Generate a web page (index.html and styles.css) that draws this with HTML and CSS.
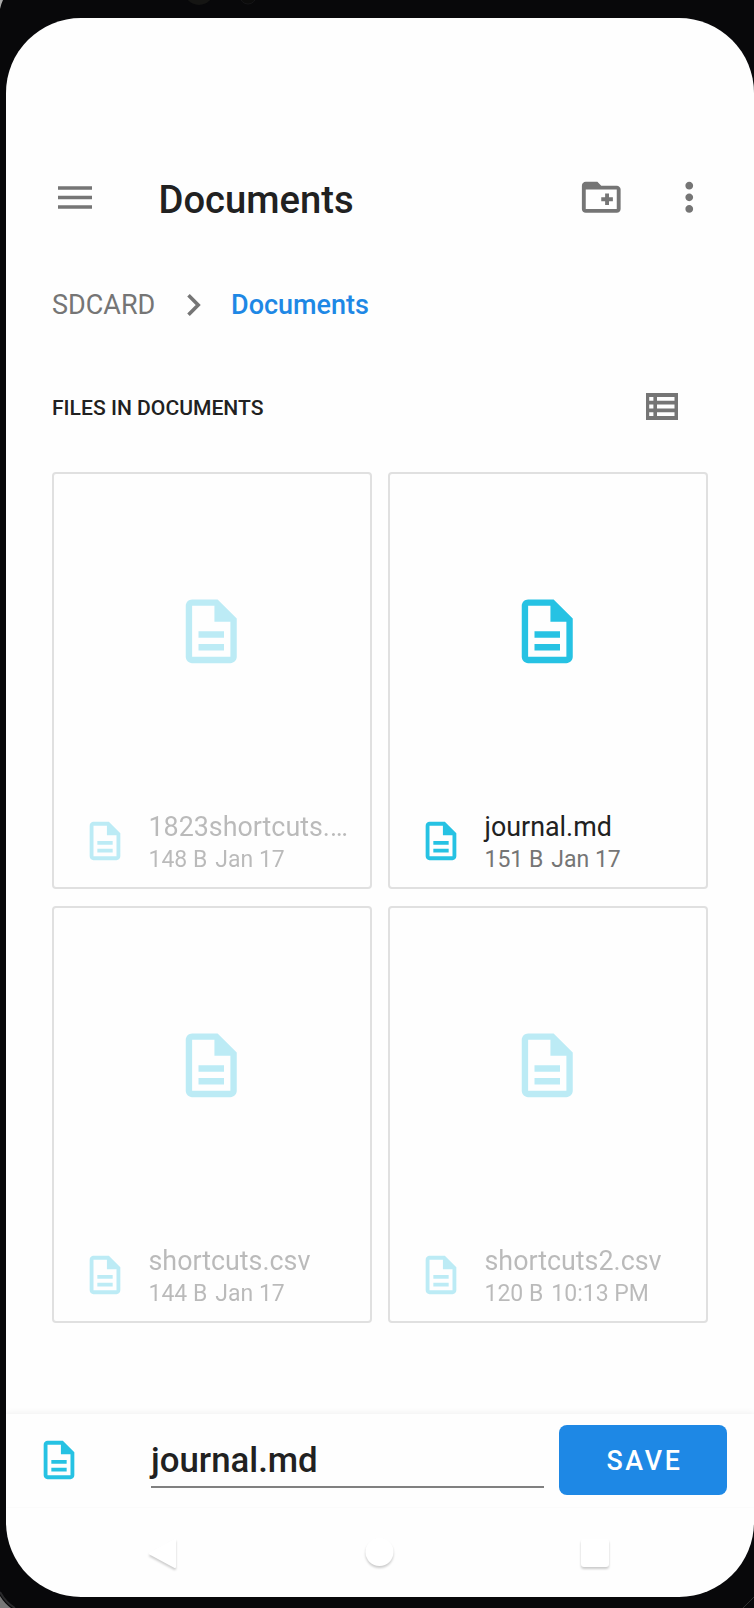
FILE: index.html
```
<!DOCTYPE html>
<html lang="en">
<head>
<meta charset="utf-8">
<title>Documents</title>
<link rel="stylesheet" href="styles.css">
</head>
<body>
<svg class="defs" width="0" height="0">
  <symbol id="doc" viewBox="0 0 24 24"><path d="M8 16h8v2H8zm0-4h8v2H8zm6-10H6c-1.100 0-2 .9-2 2v16c0 1.100.890 2 1.990 2H18c1.100 0 2-.9 2-2V8l-6-6zm4 18H6V4h7v5h5v11z"/></symbol>
</svg>
<div class="device">
  <svg class="bezel" width="754" height="1608" viewBox="0 0 754 1608">
    <path d="M0 0H3Q1 4 0 9z" fill="#aaa"/>
    <circle cx="199" cy="-10" r="15" fill="#151513"/>
    <circle cx="248" cy="-4" r="8" fill="#0b0b0b" stroke="#151517"/>
    <path d="M0 1596Q5 1604 11 1608H0z" fill="#777"/>
    <path d="M0 1592Q6 1603 15 1608" fill="none" stroke="#2a2a2c" stroke-width="2"/>
    <path d="M754 1597L743 1608" stroke="#303030" stroke-width="1"/>
  </svg>
  <main class="screen">
    <header class="appbar">
      <svg class="menu" viewBox="0 0 34 24"><path d="M0 2h34M0 11.500h34M0 21h34" stroke="#757575" stroke-width="3.400"/></svg>
      <h1 class="title">Documents</h1>
      <svg class="newfolder" viewBox="0 0 24 24"><path d="M20 6h-8l-2-2H4c-1.110 0-1.990.890-1.990 2L2 18c0 1.110.890 2 2 2h16c1.110 0 2-.890 2-2V8c0-1.110-.890-2-2-2zm0 12H4V8h16v10zm-8-4h2v2h2v-2h2v-2h-2v-2h-2v2h-2z"/></svg>
      <svg class="more" viewBox="0 0 24 24"><path d="M12 8c1.100 0 2-.9 2-2s-.9-2-2-2-2 .9-2 2 .9 2 2 2zm0 2c-1.100 0-2 .9-2 2s.9 2 2 2 2-.9 2-2-.9-2-2-2zm0 6c-1.100 0-2 .9-2 2s.9 2 2 2 2-.9 2-2-.9-2-2-2z"/></svg>
    </header>
    <nav class="crumbs">
      <span class="crumb">SDCARD</span>
      <svg class="chevron" viewBox="0 0 14 24"><path d="M1.500 2.200L11.200 12L1.500 21.800" fill="none" stroke="#757575" stroke-width="3.600"/></svg>
      <span class="crumb current">Documents</span>
    </nav>
    <div class="section">
      <h2 class="label">FILES IN DOCUMENTS</h2>
      <svg class="listview" viewBox="0 0 32 27"><path fill-rule="evenodd" d="M0 0h32v27H0zM3.200 4v3.700h4.200V4zM11 4v3.700h17.500V4zM3.200 11.500v3.900h4.200v-3.900zM11 11.500v3.900h17.500v-3.900zM3.200 19.200v3.700h4.200v-3.700zM11 19.200v3.700h17.500v-3.700z"/></svg>
    </div>
    <section class="grid">
      <article class="card off"><div class="thumb"><svg class="big"><use href="#doc"/></svg></div><div class="info"><svg class="small"><use href="#doc"/></svg><div class="text"><div class="name">1823shortcuts.…</div><div class="meta"><span>148 B</span><span>Jan 17</span></div></div></div></article>
      <article class="card"><div class="thumb"><svg class="big"><use href="#doc"/></svg></div><div class="info"><svg class="small"><use href="#doc"/></svg><div class="text"><div class="name">journal.md</div><div class="meta"><span>151 B</span><span>Jan 17</span></div></div></div></article>
      <article class="card off"><div class="thumb"><svg class="big"><use href="#doc"/></svg></div><div class="info"><svg class="small"><use href="#doc"/></svg><div class="text"><div class="name">shortcuts.csv</div><div class="meta"><span>144 B</span><span>Jan 17</span></div></div></div></article>
      <article class="card off"><div class="thumb"><svg class="big"><use href="#doc"/></svg></div><div class="info"><svg class="small"><use href="#doc"/></svg><div class="text"><div class="name">shortcuts2.csv</div><div class="meta"><span>120 B</span><span>10:13 PM</span></div></div></div></article>
    </section>
    <footer class="savebar">
      <svg class="small"><use href="#doc"/></svg>
      <div class="field">journal.md</div>
      <button class="save">SAVE</button>
    </footer>
    <div class="navbar">
      <svg class="key" viewBox="0 0 28 30"><path d="M26 1v27L1 14.500z" fill="#fff" stroke="#fff" stroke-linejoin="round" stroke-width="2"/></svg>
      <svg class="key" viewBox="0 0 28 30"><circle cx="14.500" cy="13" r="14" fill="#fff"/></svg>
      <svg class="key" viewBox="0 0 28 30"><rect width="28" height="28" rx="3" fill="#fff"/></svg>
    </div>
  </main>
</div>
</body>
</html>
```
FILE: styles.css
```
* { box-sizing: border-box; }
body { margin: 0; font-family: Roboto, "Liberation Sans", sans-serif; color: #212121; }
svg { display: block; flex: none; fill: #757575; }
.defs { position: absolute; }
.device { position: relative; width: 754px; height: 1608px; padding: 18px 0 0 6px; background: #08080a; overflow: hidden; }
.bezel { position: absolute; left: 0; top: 0; }
.screen { position: relative; width: 748px; height: 1579px; padding-top: 134px; background: #fefefe; border-radius: 75px; overflow: hidden; display: flex; flex-direction: column; }
.appbar { display: flex; align-items: center; height: 92px; padding-left: 51.500px; }
.menu { width: 34px; height: 24px; margin-top: -1px; }
.title { flex: none; margin: 3px 0 0 67px; width: 402px; font-size: 38.200px; line-height: 46px; font-weight: 500; white-space: nowrap; }
.newfolder, .more { width: 46.500px; height: 46.500px; }
.newfolder { margin: -1.500px 0 0 17.300px; }
.more { margin: -1.500px 0 0 41.500px; }
.crumbs { display: flex; align-items: center; height: 122px; padding-left: 46px; font-size: 27px; line-height: 32px; }
.crumb { width: 134.500px; color: #757575; font-weight: 400; }
.chevron { width: 14px; height: 24px; margin: -1px 30.500px 0 0; }
.crumb.current { color: #1e88e5; font-weight: 500; }
.section { display: flex; align-items: center; justify-content: space-between; height: 82px; padding: 0 76.500px 0 46px; }
.label { margin: 2px 0 0; font-size: 21.100px; line-height: 26px; font-weight: 500; white-space: nowrap; }
.listview { width: 32px; height: 27px; margin-top: -2px; }
.grid { display: grid; grid-template-columns: 319.500px 319.500px; grid-auto-rows: 417px; gap: 17px 16.500px; padding: 24px 0 0 46px; height: 965.500px; }
.card { border: 2px solid #e0e0e0; border-radius: 4px; }
.card svg, .savebar svg { fill: #26c2e3; }
.thumb { display: flex; justify-content: center; padding: 119px 1px 0 0; height: 314.500px; }
.big { width: 76.500px; height: 76.500px; }
.info { display: flex; padding-left: 27.500px; }
.small { width: 46px; height: 46px; }
.info .small { margin-top: 29.200px; }
.text { padding: 22px 0 0 21px; white-space: nowrap; }
.name { font-size: 26.850px; line-height: 32px; }
.meta { display: flex; gap: 8px; font-size: 23px; line-height: 34px; color: #757575; }
.off .text { opacity: .3; }
.off .name, .off .meta { color: #212121; }
.off svg { opacity: .3; }
.savebar { display: flex; height: 94px; padding: 11px 27px 0 30px; background: #fefefe; box-shadow: 0 0 7px rgba(0,0,0,.08); clip-path: inset(-12px 0 0 0); }
.savebar .small { margin: 12px 0 0; }
.field { width: 393px; height: 63px; margin: 0 15px 0 69px; border-bottom: 2px solid #808080; font-size: 34.800px; line-height: 71px; font-weight: 500; }
.save { width: 168px; height: 70px; padding: 2px 0 0 3px; border: 0; border-radius: 8px; background: #1e88e5; color: #fff; font: 500 26.800px/68px Roboto, sans-serif; letter-spacing: 2.700px; text-align: center; }
.navbar { display: flex; gap: 188px; padding: 31px 0 0 143px; }
.key { width: 28px; height: 30px; overflow: visible; filter: drop-shadow(0 2px 1px rgba(0,0,0,.2)); }
```
